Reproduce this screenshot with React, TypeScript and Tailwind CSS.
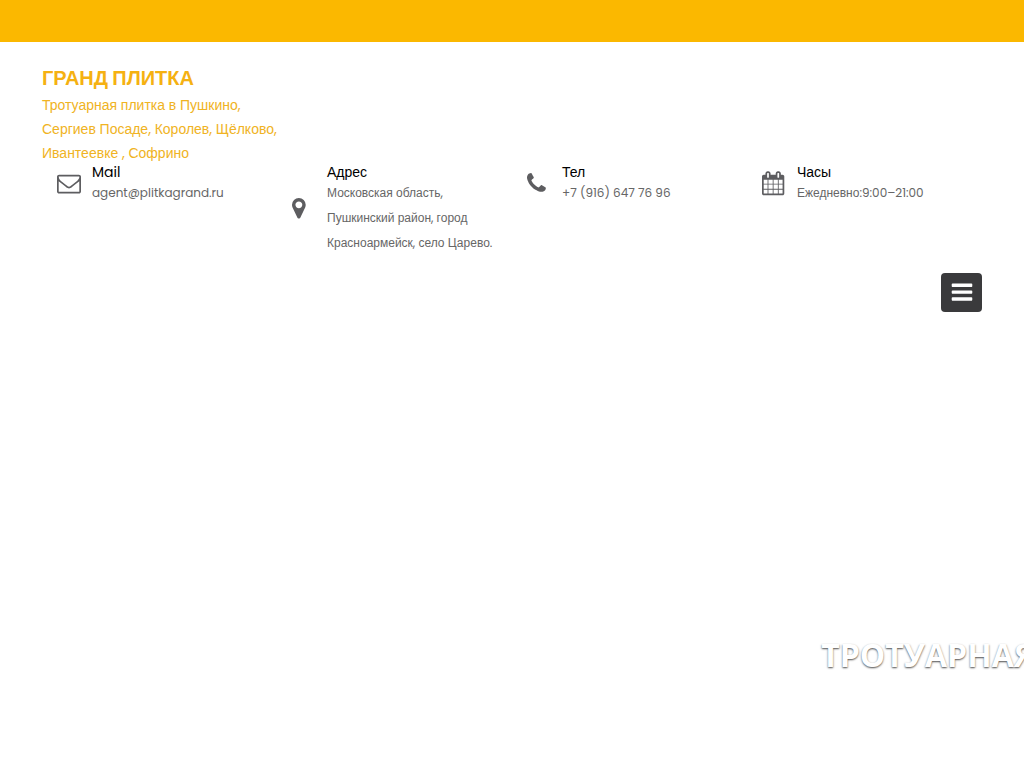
import React from "react";

type IconProps = { viewBox: string; d: string; className: string };

const Icon = ({ viewBox, d, className }: IconProps) => (
  <svg viewBox={viewBox} className={className} fill="currentColor" aria-hidden="true">
    <path d={d} />
  </svg>
);

const ENVELOPE =
  "M1664 1504v-768q-32 36-69 66-268 206-426 338-51 43-83 67t-86.5 48.5-102.5 24.5h-2q-48 0-102.5-24.5t-86.5-48.5-83-67q-158-132-426-338-37-30-69-66v768q0 13 9.5 22.5t22.5 9.5h1472q13 0 22.5-9.5t9.5-22.5zm0-1051v-24.5l-.5-13-3-12.5-5.5-9-9-7.5-14-2.5h-1472q-13 0-22.5 9.5t-9.5 22.5q0 168 147 284 193 152 401 317 6 5 35 29.5t46 37.5 44.5 31.5 50.5 27.5 43 9h2q20 0 43-9t50.5-27.5 44.5-31.5 46-37.5 35-29.5q208-165 401-317 54-43 100.5-115.5t46.5-131.5zm128-37v1088q0 66-47 113t-113 47h-1472q-66 0-113-47t-47-113v-1088q0-66 47-113t113-47h1472q66 0 113 47t47 113z";
const MARKER =
  "M1152 640q0-106-75-181t-181-75-181 75-75 181 75 181 181 75 181-75 75-181zm256 0q0 109-33 179l-364 774q-16 33-47.5 52t-67.5 19-67.5-19-46.5-52l-365-774q-33-70-33-179 0-212 150-362t362-150 362 150 150 362z";
const PHONE =
  "M1600 1240q0 27-10 70.5t-21 68.5q-21 50-122 106-94 51-186 51-27 0-53-3.5t-57.5-12.5-47-14.5-55.5-20.5-49-18q-98-35-175-83-127-79-264-216t-216-264q-48-77-83-175-3-9-18-49t-20.5-55.5-14.5-47-12.5-57.5-3.5-53q0-92 51-186 56-101 106-122 25-11 68.5-21t70.5-10q14 0 21 3 18 6 53 76 11 19 30 54t35 63.5 31 53.5q3 4 17.5 25t21.5 35.5 7 28.5q0 20-28.5 50t-62 55-62 53-28.5 46q0 9 5 22.5t8.5 20.5 14 24 11.5 19q76 137 174 235t235 174q2 1 19 11.5t24 14 20.5 8.5 22.5 5q18 0 46-28.5t53-62 55-62 50-28.5q14 0 28.5 7t35.5 21.5 25 17.5q25 15 53.5 31t63.5 35 54 30q70 35 76 53 3 7 3 21z";
const CALENDAR =
  "M192 1664h288v-288h-288v288zm352 0h320v-288h-320v288zm-352-352h288v-320h-288v320zm352 0h320v-320h-320v320zm-352-384h288v-288h-288v288zm736 736h320v-288h-320v288zm-384-736h320v-288h-320v288zm768 736h288v-288h-288v288zm-384-352h320v-320h-320v320zm-352-864v-288q0-13-9.5-22.5t-22.5-9.5h-64q-13 0-22.5 9.5t-9.5 22.5v288q0 13 9.5 22.5t22.5 9.5h64q13 0 22.5-9.5t9.5-22.5zm736 864h288v-320h-288v320zm-384-384h320v-288h-320v288zm384 0h288v-288h-288v288zm32-480v-288q0-13-9.5-22.5t-22.5-9.5h-64q-13 0-22.5 9.5t-9.5 22.5v288q0 13 9.5 22.5t22.5 9.5h64q13 0 22.5-9.5t9.5-22.5zm384-64v1280q0 52-38 90t-90 38h-1408q-52 0-90-38t-38-90v-1280q0-52 38-90t90-38h128v-96q0-66 47-113t113-47h64q66 0 113 47t47 113v96h384v-96q0-66 47-113t113-47h64q66 0 113 47t47 113v96h128q52 0 90 38t38 90z";
const BARS =
  "M1664 1344v128q0 26-19 45t-45 19h-1408q-26 0-45-19t-19-45v-128q0-26 19-45t45-19h1408q26 0 45 19t19 45zm0-512v128q0 26-19 45t-45 19h-1408q-26 0-45-19t-19-45v-128q0-26 19-45t45-19h1408q26 0 45 19t19 45zm0-512v128q0 26-19 45t-45 19h-1408q-26 0-45-19t-19-45v-128q0-26 19-45t45-19h1408q26 0 45 19t19 45z";

const contacts = [
  { title: "Mail", text: "agent@plitkagrand.ru", viewBox: "0 128 1792 1792", d: ENVELOPE },
  {
    title: "Адрес",
    text: "Московская область, Пушкинский район, город Красноармейск, село Царево.",
    viewBox: "384 128 1792 1792",
    d: MARKER,
  },
  { title: "Тел", text: "+7 (916) 647 76 96", viewBox: "192 128 1792 1792", d: PHONE },
  { title: "Часы", text: "Ежедневно:9:00–21:00", viewBox: "64 128 1792 1792", d: CALENDAR },
];

const App = () => {
  return (
    <div className="min-h-screen bg-white font-['Poppins','Liberation_Sans',sans-serif]">
      <div className="h-[42px] bg-[#fbb800]" />

      <header className="px-[42px] pt-[21px]">
        <h1 className="text-xl leading-[30px] font-bold text-[#f5b112]">
          <a href="#">ГРАНД ПЛИТКА</a>
        </h1>
        <p className="w-60 text-sm leading-6 text-[#f0b323]">
          Тротуарная плитка в Пушкино, Сергиев Посаде, Королев, Щёлково,
          Ивантеевке , Софрино
        </p>

        <div className="grid grid-cols-4 items-start">
          {contacts.map((item) => (
            <div key={item.title} className="flex items-center pl-[15px]">
              <div className="w-[35px] shrink-0 text-[#5d5d60]">
                <Icon viewBox={item.viewBox} d={item.d} className="size-6 overflow-visible" />
              </div>
              <div className="min-w-0 flex-1">
                <h2 className="text-sm leading-[15px] text-black">{item.title}</h2>
                <p className="pr-4 text-xs leading-[25px] text-[#666]">
                  {item.text}
                </p>
              </div>
            </div>
          ))}
        </div>

        <div className="mt-[18px] flex justify-end">
          <button
            type="button"
            aria-label="Меню"
            className="flex h-[39px] w-[41px] items-center justify-center rounded-sm bg-[#3a3a3c] text-white"
          >
            <Icon viewBox="0 64 1792 1792" d={BARS} className="size-6" />
          </button>
        </div>
      </header>

      <section className="overflow-hidden pt-80 pl-[80%]">
        <p className="pl-0.5 font-['Open_Sans',sans-serif] text-[32px] leading-[46px] font-bold whitespace-nowrap text-white [text-shadow:0_1px_2px_rgba(0,0,0,0.7)]">
          ТРОТУАРНАЯ
        </p>
      </section>
    </div>
  );
};

export default App;
